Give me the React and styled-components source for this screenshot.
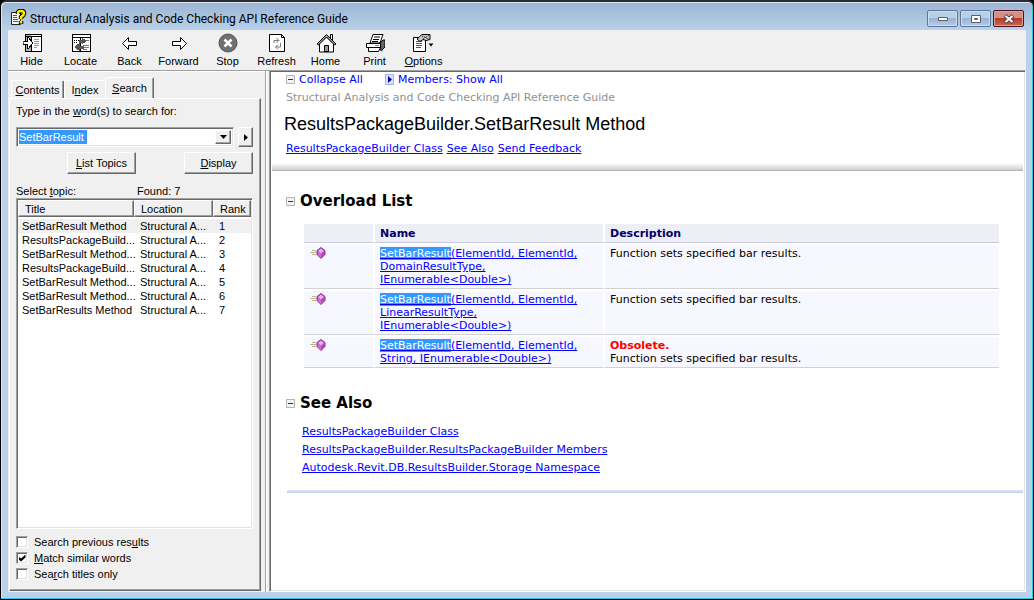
import React, { useEffect, useRef } from "react";
import styled, { createGlobalStyle, css } from "styled-components";

const GlobalStyle = createGlobalStyle`
  *, *::before, *::after { box-sizing: border-box; }
  body { margin: 0; background: #000; }
  button, input { font: inherit; color: inherit; }
`;

const uiFont = css`
  font-family: "Liberation Sans", Arial, sans-serif;
  font-size: 11px;
  line-height: 14px;
`;

const raised = css`
  border: 1px solid;
  border-color: #fff #696969 #696969 #fff;
  box-shadow: inset -1px -1px #a0a0a0;
  background: #f0f0f0;
`;

const sunken = css`
  border: 1px solid;
  border-color: #a0a0a0 #fff #fff #a0a0a0;
  box-shadow: inset 1px 1px #696969, inset -1px -1px #e3e3e3;
  background: #fff;
`;

const Window = styled.div`
  min-height: 100vh;
  display: flex;
  flex-direction: column;
  padding: 0 7px 7px 6px;
  border: 1px solid #000;
  border-top: 2px solid #2b2a30;
  border-radius: 6px 6px 0 0;
  box-shadow: inset -1px -1px #2cc8ea, inset 1px 1px #d9e6f4;
  background: linear-gradient(#9ab4d2, #b9d1ea 28px);
  color: #000;
  ${uiFont}
`;

const TitleBar = styled.header`
  display: flex;
  align-items: center;
  height: 28px;
  padding: 2px 2px 0 3px;
  gap: 3px;
`;

const WindowTitle = styled.h1`
  flex: 1;
  margin: 0;
  padding-top: 3px;
  font: 12px/16px Roboto, "Open Sans", sans-serif;
`;

const Caption = styled.div`
  display: flex;
  gap: 2px;
  padding-top: 3px;
`;

const CaptionButton = styled.button`
  display: grid;
  place-items: center;
  width: 31px;
  height: 17px;
  padding: 0;
  border: 1px solid ${(p) => (p.$close ? "#4a1020" : "#5d7898")};
  border-radius: 2px;
  box-shadow: inset 0 0 0 1px ${(p) => (p.$close ? "#dba49c" : "#c9dcf0")};
  background: ${(p) =>
    p.$close
      ? "linear-gradient(#d39085 0 45%, #b83a26 50%, #c96a50)"
      : "linear-gradient(#b9d0ea 0 45%, #97b4d3 50%, #b5cee8)"};
`;

const Client = styled.div`
  flex: 1;
  display: flex;
  flex-direction: column;
  margin-left: 1px;
  background: #f0f0f0;
`;

const Toolbar = styled.nav`
  display: flex;
  height: 40px;
`;

const ToolButton = styled.button`
  display: flex;
  flex-direction: column;
  align-items: center;
  gap: 1px;
  width: 49px;
  padding: 3px 2px 0 0;
  border: 0;
  background: none;
  line-height: 15px;
  white-space: nowrap;
`;

const Panes = styled.div`
  flex: 1;
  display: flex;
`;

const Navigation = styled.aside`
  flex: none;
  display: flex;
  flex-direction: column;
  width: 257px;
  padding: 6px 4px 1px 1px;
  border-top: 1px solid #a0a0a0;
  box-shadow: inset 0 1px #fff;
`;

const Tabs = styled.div`
  display: flex;
  align-items: flex-end;
  height: 21px;
  padding-left: 2px;
`;

const Tab = styled.button`
  width: ${(p) => p.$width}px;
  height: ${(p) => (p.$active ? 22 : 18)}px;
  padding: ${(p) => (p.$active ? "0 0 2px" : "1px 0 0")};
  margin-bottom: ${(p) => (p.$active ? -1 : 0)}px;
  border: 1px solid;
  border-color: #fff #696969 transparent #fff;
  border-bottom: 0;
  border-right-width: ${(p) => (p.$last ? 0 : 1)}px;
  border-radius: 2px 2px 0 0;
  box-shadow: ${(p) => (p.$last ? "none" : "inset -1px 0 #a0a0a0")};
  background: #f0f0f0;
  white-space: nowrap;
`;

const SearchPanel = styled.form`
  flex: 1;
  display: flex;
  flex-direction: column;
  padding: 5px 7px 9px 6px;
  ${raised}
`;

const Combo = styled.div`
  flex: 1;
  display: flex;
  padding: 2px;
  ${sunken}
`;

const ComboInput = styled.input`
  flex: 1;
  width: 0;
  height: 14px;
  margin: 0;
  padding: 0;
  border: 0;
  outline: 0;
  background: none;
  line-height: 14px;
  &::selection { background: #3399ff; color: #fff; }
`;

const SearchRow = styled.div`
  display: flex;
  gap: 4px;
  margin-top: 9px;
`;

const ArrowButton = styled.button`
  display: grid;
  place-items: center;
  width: ${(p) => p.$width}px;
  padding: 0;
  ${raised}
`;

const ButtonRow = styled.div`
  display: flex;
  justify-content: space-between;
  padding-left: 51px;
  margin-top: 5px;
`;

const PushButton = styled.button`
  width: 69px;
  height: 22px;
  padding: 0;
  ${raised}
`;

const ListCaption = styled.div`
  display: flex;
  margin: 10px 0 0;
  & > span:first-child { width: 121px; }
`;

const TopicBox = styled.div`
  flex: 1;
  padding: 1px 1px 2px 1px;
  ${sunken}
`;

const TopicTable = styled.table`
  width: 100%;
  table-layout: fixed;
  border-collapse: separate;
  border-spacing: 0;
  text-align: left;
  thead::after { content: ""; display: block; height: 2px; }
  th {
    height: 17px;
    padding: 0 6px;
    font-weight: normal;
    ${raised}
  }
  td {
    height: 14px;
    padding: 0 0 0 6px;
    line-height: 14px;
    white-space: nowrap;
  }
  td:first-child { padding-left: 4px; }
  tr[aria-selected="true"] td { background: #f0f0f0; }
`;

const Options = styled.div`
  display: flex;
  flex-direction: column;
  gap: 2px;
  margin-top: 6px;
`;

const Option = styled.label`
  display: flex;
  align-items: center;
  gap: 6px;
`;

const Checkbox = styled.input`
  appearance: none;
  display: grid;
  place-items: center;
  width: 12px;
  height: 12px;
  margin: 0;
  ${sunken}
  &:checked::before {
    content: "";
    width: 7px;
    height: 7px;
    background: #000;
    clip-path: polygon(0 28%, 36% 58%, 100% 0, 100% 42%, 36% 100%, 0 70%);
  }
`;

const Splitter = styled.div`
  width: 4px;
  border-top: 1px solid #a0a0a0;
  border-left: 1px solid #a0a0a0;
  box-shadow: inset 1px 0 #fff;
`;

const Topic = styled.main`
  flex: 1;
  min-width: 0;
  padding: 2px;
  ${sunken}
  font: 11px/13px "DejaVu Sans", Verdana, sans-serif;
`;

const Link = styled.a`
  color: #0000ff;
  text-decoration: ${(p) => (p.$plain ? "none" : "underline")};
`;

const TopicHeader = styled.div`
  height: 98px;
  padding: 0 14px;
  border-bottom: 1px solid #b4b4b4;
  background: linear-gradient(#fff 90px, #c8c8c8 98px);
`;

const HeaderLinks = styled.div`
  display: flex;
  gap: 22px;
  a { display: flex; align-items: center; gap: 4px; }
`;

const ProjectName = styled.div`
  margin-top: 5px;
  color: #919191;
`;

const TopicTitle = styled.h2`
  margin: 10px 0 8px -2px;
  font: 18px/20px "Liberation Sans", Arial, sans-serif;
`;

const TopicLinks = styled.div`
  display: flex;
  gap: 4px;
`;

const Section = styled.section`
  padding: 0 24px 0 14px;
  margin-top: ${(p) => p.$top}px;
`;

const SectionTitle = styled.h3`
  display: flex;
  align-items: center;
  gap: 5px;
  margin: 0;
  font-size: 15px;
  line-height: 18px;
`;

const Members = styled.table`
  width: calc(100% - 18px);
  margin: 14px 0 0 18px;
  table-layout: fixed;
  border-collapse: separate;
  border-spacing: 0;
  text-align: left;
  vertical-align: top;
  th, td {
    padding: 3px 5px 2px;
    vertical-align: top;
    border-right: 2px solid #fff;
  }
  th:last-child, td:last-child { border-right: 0; }
  th {
    height: 18px;
    color: #000066;
    background: #eeeef7;
    border-bottom: 1px solid #c8cbe0;
  }
  td {
    padding: 4px 5px 2px;
    background: #f7f7ff;
    background-clip: padding-box;
    border-bottom: 1px solid #d2d2d2;
    box-shadow: inset 0 2px #fff;
  }
  svg { display: block; }
`;

const Mark = styled.span`
  background: #3399ff;
  color: #fff;
`;

const Obsolete = styled.strong`
  display: block;
  color: #ff0000;
`;

const SeeAlsoList = styled.ul`
  margin: 11px 0 0;
  padding: 0 0 0 16px;
  list-style: none;
  line-height: 18px;
`;

const Footer = styled.hr`
  height: 3px;
  margin: 13px 0 0 15px;
  border: 0;
  background: linear-gradient(#e6e8f8, #c5cbe6);
`;

const Glyph = ({ w = 20, h = 20, children }) => (
  <svg width={w} height={h} viewBox={`0 0 ${w} ${h}`} fill="none" stroke="#000" aria-hidden="true">
    {children}
  </svg>
);

const HelpIcon = () => (
  <Glyph w={17} h={17}>
    <path d="M1.500 3.500h9v12h-9z" fill="#fff" stroke="#222" />
    <path d="M3 6.500h4M3 8.500h4M3 10.500h5M3 12.500h5" stroke="#555" />
    <path d="M8 5V3.500Q8.500 2 11 2Q14 2 14 4.500Q14 6 11 8V10M11 12v3" stroke="#000" strokeWidth="4.500" />
    <path d="M8 5V3.500Q8.500 2 11 2Q14 2 14 4.500Q14 6 11 8V10M11 12v2.500" stroke="#ffee00" strokeWidth="2.500" />
  </Glyph>
);

const icons = {
  Hide: (
    <g shapeRendering="crispEdges">
      <path d="M3.500 1.500h16v17h-16z" fill="#fff" />
      <path d="M4 2h5v16H4z" fill="#b4b4b4" stroke="none" />
      <path d="M3 3.500h16M9.500 3v15" />
      <path d="M12 6.500h5M12 8.500h5M12 10.500h5M12 12.500h5M12 14.500h3" stroke="#999" />
      <path d="M1.500 8.500h4v-4h1l4.500 5.500-4.500 5.500h-1v-4h-4z" fill="#fff" />
      <path d="M1.500 8v3" stroke="#e03020" />
    </g>
  ),
  Locate: (
    <g shapeRendering="crispEdges">
      <path d="M1.500 1.500h18v17h-18zM1 4.500h18M9.500 4v14" fill="#fff" />
      <path d="M3 7.500h5M3 9.500h3" strokeDasharray="1 1" />
      <path d="M14 7.500h4M12 12.500h6M12 14.500h6M12 16.500h4" stroke="#777" />
      <path d="M8 7h3V5l4 3-4 3V9H8zM12 13H8v-2l-4 3 4 3v-2h4z" fill="#555" stroke="#555" />
    </g>
  ),
  Back: <path d="M2.500 10.500l6-6v4h8v4h-8v4z" fill="#fff" />,
  Forward: <path d="M17.500 10.500l-6-6v4h-8v4h8v4z" fill="#fff" />,
  Stop: (
    <>
      <circle cx="10" cy="10" r="9" fill="#707070" stroke="#555" />
      <path d="M6.500 6.500l7 7M13.500 6.500l-7 7" stroke="#fff" strokeWidth="2.500" />
    </>
  ),
  Refresh: (
    <>
      <path d="M2.500 1.500h12l3 3v14h-15zM14.500 1.500v3h3" fill="#fff" />
      <path d="M7 10V7.500h4.500M9.500 5l2.500 2.500L9.500 10M13.500 10v4H9M11 11.500L8.500 14l2.500 2.500" stroke="#777" />
    </>
  ),
  Home: (
    <>
      <path d="M14.500 6V1.500h2V8" fill="#fff" />
      <path d="M3.500 10.500V19h14v-8.500L10.500 4z" fill="#fff" />
      <path d="M1 11L10.500 1.500 20 11l-1.500 1-8-8-8 8z" fill="#aaa" />
      <path d="M8.500 18.500v-6h4v6z" fill="#999" />
    </>
  ),
  Print: (
    <>
      <path d="M5 10l3-8.500h10L15 10z" fill="#fff" />
      <path d="M9 4h6M8 6.500h6M7 8.500h6" />
      <path d="M15 10l3-3h2v7l-4 4z" fill="#666" />
      <path d="M1.500 10.500h14v4h-14zM3.500 14.500h12l-2 4h-10z" fill="#fff" />
      <path d="M10 12.500h4" stroke="#888" />
      <path d="M16 18h2" stroke="#20c0e0" />
    </>
  ),
  Options: (
    <>
      <path d="M.5 4.500h12v14H.5z" fill="#fff" />
      <path d="M3 8.500h6M3 10.500h6M3 12.500h6M3 14.500h5" stroke="#555" />
      <path d="M4 6l5-4.500h8v5l-4 1-3-1-3 2z" fill="#ccc" />
      <path d="M9 3l7 3M16 2l-6 4" strokeDasharray="1 1" />
      <path d="M15.500 10.500h5l-2.500 3z" fill="#000" stroke="none" />
    </>
  ),
};

const CollapseIcon = () => (
  <Glyph w={9} h={9}>
    <path d="M.5.5h8v8h-8z" fill="#f3f3f3" stroke="#b4b4b4" />
    <path d="M2 4.500h5" stroke="#333" />
  </Glyph>
);

const ExpandIcon = () => (
  <Glyph w={9} h={11}>
    <path d="M.5.5h8v10h-8z" fill="#d9e4ff" stroke="#9db4f0" />
    <path d="M3 2v7l4-3.500z" fill="#0000c0" stroke="none" />
  </Glyph>
);

const MethodIcon = () => (
  <Glyph w={18} h={12}>
    <path d="M3 3.500h4M1 5.500h6M3 7.500h4" stroke="#b9b98a" />
    <path d="M12 .5l4 3v4l-4 4-4-4v-4z" fill="#b848b8" stroke="#8a3a92" />
    <path d="M12 1.500l3 2.500-3 2.500L9 4z" fill="#f2a8f0" stroke="none" />
    <path d="M9 4l3 2.500V11L9 8z" fill="#d070d0" stroke="none" />
  </Glyph>
);

const tools = ["Hide", "Locate", "Back", "Forward", "Stop", "Refresh", "Home", "Print"];

const topics = [
  "SetBarResult Method",
  "ResultsPackageBuild...",
  "SetBarResult Method...",
  "ResultsPackageBuild...",
  "SetBarResult Method...",
  "SetBarResult Method...",
  "SetBarResults Method",
];

const overloads = [
  { args: "(ElementId, ElementId, DomainResultType, IEnumerable<Double>)" },
  { args: "(ElementId, ElementId, LinearResultType, IEnumerable<Double>)" },
  { args: "(ElementId, ElementId, String, IEnumerable<Double>)", obsolete: true },
];

const related = [
  "ResultsPackageBuilder Class",
  "ResultsPackageBuilder.ResultsPackageBuilder Members",
  "Autodesk.Revit.DB.ResultsBuilder.Storage Namespace",
];

function SearchPane() {
  const query = useRef(null);
  useEffect(() => {
    query.current.focus();
    query.current.select();
  }, []);

  return (
    <Navigation>
      <Tabs role="tablist">
        <Tab type="button" role="tab" $width={53}><u>C</u>ontents</Tab>
        <Tab type="button" role="tab" $width={41} $last>I<u>n</u>dex</Tab>
        <Tab type="button" role="tab" aria-selected="true" $width={49} $active><u>S</u>earch</Tab>
      </Tabs>
      <SearchPanel onSubmit={(e) => e.preventDefault()}>
        <label htmlFor="query">Type in the <u>w</u>ord(s) to search for:</label>
        <SearchRow>
          <Combo>
            <ComboInput id="query" ref={query} defaultValue="SetBarResult " autoComplete="off" spellCheck={false} />
            <ArrowButton type="button" $width={16} aria-label="Recent searches">
              <Glyph w={7} h={4}><path d="M0 0h7L3.500 4z" fill="#000" stroke="none" /></Glyph>
            </ArrowButton>
          </Combo>
          <ArrowButton type="button" $width={15} aria-label="Search operators">
            <Glyph w={4} h={7}><path d="M0 0v7l4-3.500z" fill="#000" stroke="none" /></Glyph>
          </ArrowButton>
        </SearchRow>
        <ButtonRow>
          <PushButton><u>L</u>ist Topics</PushButton>
          <PushButton type="button"><u>D</u>isplay</PushButton>
        </ButtonRow>
        <ListCaption>
          <span>Select <u>t</u>opic:</span>
          <span>Found: 7</span>
        </ListCaption>
        <TopicBox>
          <TopicTable>
            <colgroup><col width="116" /><col width="79" /><col /></colgroup>
            <thead>
              <tr><th>Title</th><th>Location</th><th>Rank</th></tr>
            </thead>
            <tbody>
              {topics.map((title, i) => (
                <tr key={i} aria-selected={i === 0}>
                  <td>{title}</td><td>Structural A...</td><td>{i + 1}</td>
                </tr>
              ))}
            </tbody>
          </TopicTable>
        </TopicBox>
        <Options>
          <Option><Checkbox type="checkbox" /><span>Search previous res<u>u</u>lts</span></Option>
          <Option><Checkbox type="checkbox" defaultChecked /><span><u>M</u>atch similar words</span></Option>
          <Option><Checkbox type="checkbox" /><span>Sea<u>r</u>ch titles only</span></Option>
        </Options>
      </SearchPanel>
    </Navigation>
  );
}

function TopicPane() {
  return (
    <Topic>
      <TopicHeader>
        <HeaderLinks>
          <Link href="#collapse" $plain><CollapseIcon />Collapse All</Link>
          <Link href="#members" $plain><ExpandIcon />Members: Show All</Link>
        </HeaderLinks>
        <ProjectName>Structural Analysis and Code Checking API Reference Guide</ProjectName>
        <TopicTitle>ResultsPackageBuilder.SetBarResult Method</TopicTitle>
        <TopicLinks>
          <Link href="#class">ResultsPackageBuilder Class</Link>
          <Link href="#see-also">See Also</Link>
          <Link href="#feedback">Send Feedback</Link>
        </TopicLinks>
      </TopicHeader>
      <Section $top={21}>
        <SectionTitle><CollapseIcon />Overload List</SectionTitle>
        <Members>
          <colgroup><col width="71" /><col width="230" /><col /></colgroup>
          <thead>
            <tr><th aria-label="Kind" /><th>Name</th><th>Description</th></tr>
          </thead>
          <tbody>
            {overloads.map(({ args, obsolete }) => (
              <tr key={args}>
                <td><MethodIcon /></td>
                <td><Link href="#overload"><Mark>SetBarResult</Mark>{args}</Link></td>
                <td>
                  {obsolete && <Obsolete>Obsolete.</Obsolete>}
                  Function sets specified bar results.
                </td>
              </tr>
            ))}
          </tbody>
        </Members>
      </Section>
      <Section $top={26} id="see-also">
        <SectionTitle><CollapseIcon />See Also</SectionTitle>
        <SeeAlsoList>
          {related.map((name) => (
            <li key={name}><Link href="#related">{name}</Link></li>
          ))}
        </SeeAlsoList>
      </Section>
      <Footer />
    </Topic>
  );
}

export default function App() {
  return (
    <>
      <GlobalStyle />
      <Window>
        <TitleBar>
          <HelpIcon />
          <WindowTitle>Structural Analysis and Code Checking API Reference Guide</WindowTitle>
          <Caption>
            <CaptionButton aria-label="Minimize">
              <Glyph w={12} h={6}><path d="M1.500 1.500h9v3h-9z" fill="#fff" stroke="#555f6e" /></Glyph>
            </CaptionButton>
            <CaptionButton aria-label="Maximize">
              <Glyph w={12} h={10}>
                <path d="M1.500 1.500h9v7h-9z" fill="#fff" stroke="#555f6e" />
                <path d="M4.500 4.500h3v1h-3z" stroke="#555f6e" />
              </Glyph>
            </CaptionButton>
            <CaptionButton aria-label="Close" $close>
              <Glyph w={12} h={10}>
                <path d="M2 1.500l8 7M10 1.500l-8 7" stroke="#5a4048" strokeWidth="4" />
                <path d="M2.500 2l7 6M9.500 2l-7 6" stroke="#fff" strokeWidth="2" />
              </Glyph>
            </CaptionButton>
          </Caption>
        </TitleBar>
        <Client>
          <Toolbar>
            {tools.map((name) => (
              <ToolButton key={name}><Glyph>{icons[name]}</Glyph>{name}</ToolButton>
            ))}
            <ToolButton><Glyph w={22}>{icons.Options}</Glyph><span><u>O</u>ptions</span></ToolButton>
          </Toolbar>
          <Panes>
            <SearchPane />
            <Splitter />
            <TopicPane />
          </Panes>
        </Client>
      </Window>
    </>
  );
}
